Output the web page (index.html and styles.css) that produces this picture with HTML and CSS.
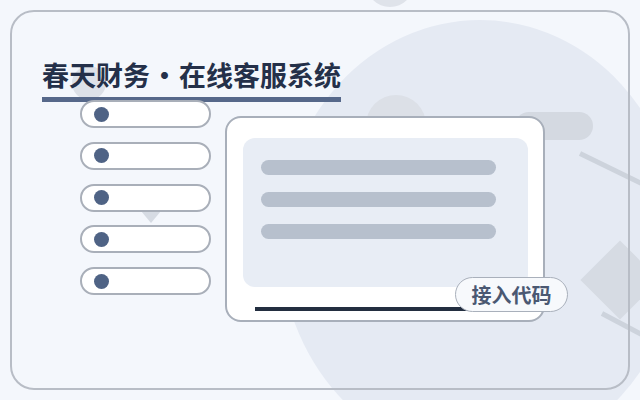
FILE: index.html
```html
<!DOCTYPE html>
<html lang="zh-CN">
<head>
<meta charset="utf-8">
<title>春天财务 · 在线客服系统</title>
<link rel="stylesheet" href="styles.css">
</head>
<body>
<div class="decor" aria-hidden="true">
  <div class="blob-big"></div>
  <div class="blob-top"></div>
  <div class="blob-mid"></div>
  <div class="blob-title"></div>
  <div class="capsule"></div>
  <div class="stroke stroke-a"></div>
  <div class="diamond"></div>
  <div class="stroke stroke-b"></div>
  <div class="tail"></div>
</div>
<main class="frame">
  <h1 class="title">春天财务<span class="sep">·</span>在线客服系统</h1>
  <div class="row">
    <ul class="pills">
      <li class="pill"><span class="dot"></span></li>
      <li class="pill"><span class="dot"></span></li>
      <li class="pill"><span class="dot"></span></li>
      <li class="pill"><span class="dot"></span></li>
      <li class="pill"><span class="dot"></span></li>
    </ul>
    <section class="card">
      <div class="panel">
        <div class="bar"></div>
        <div class="bar"></div>
        <div class="bar"></div>
      </div>
      <div class="code-line"></div>
      <button class="btn" type="button">接入代码</button>
    </section>
  </div>
</main>
</body>
</html>
```
FILE: styles.css
```css
* { box-sizing: border-box; }

html, body {
  margin: 0;
  padding: 0;
}

body {
  position: relative;
  width: 640px;
  height: 400px;
  overflow: hidden;
  background: #f4f7fc;
  font-family: "Noto Sans CJK SC", "Noto Sans", sans-serif;
}

/* decorative background layer */
.decor {
  position: absolute;
  inset: 0;
  z-index: 0;
  overflow: hidden;
}
.decor > div { position: absolute; }

.blob-big {
  left: 280px;
  top: 20px;
  width: 400px;
  height: 440px;
  border-radius: 50%;
  background: #e5eaf3;
}
.blob-top {
  left: 366px;
  top: -41px;
  width: 48px;
  height: 48px;
  border-radius: 50%;
  background: #dfe3ea;
}
.blob-mid {
  left: 366px;
  top: 95px;
  width: 60px;
  height: 60px;
  border-radius: 50%;
  background: #dce0e7;
}
.blob-title {
  left: 72px;
  top: 66px;
  width: 34px;
  height: 34px;
  border-radius: 50%;
  background: #dde1e8;
}
.capsule {
  left: 515px;
  top: 112px;
  width: 78px;
  height: 28px;
  border-radius: 14px;
  background: #d4d9e1;
}
.stroke {
  height: 5px;
  background: #cdd3dc;
  transform-origin: 0 50%;
}
.stroke-a {
  left: 580px;
  top: 151px;
  width: 80px;
  transform: rotate(26deg);
}
.stroke-b {
  left: 602px;
  top: 311px;
  width: 60px;
  transform: rotate(28deg);
}
.diamond {
  left: 592px;
  top: 252px;
  width: 56px;
  height: 56px;
  background: #d6dbe3;
  transform: rotate(45deg);
}
.tail {
  left: 136px;
  top: 205px;
  width: 0;
  height: 0;
  border-left: 15px solid transparent;
  border-right: 15px solid transparent;
  border-top: 18px solid #d6dbe3;
}

/* framed card */
.frame {
  position: relative;
  z-index: 1;
  margin: 10px;
  height: 380px;
  border: 2px solid #b8bdc6;
  border-radius: 24px;
  padding: 47px 0 0 30px;
  display: flex;
  flex-direction: column;
  align-items: flex-start;
}

.title {
  margin: 0 0 -2px;
  display: inline-block;
  font-size: 27px;
  line-height: 32px;
  font-weight: 700;
  color: #243049;
  padding-bottom: 6px;
  border-bottom: 5px solid #56688a;
  white-space: nowrap;
}
.sep {
  display: inline-block;
  width: 29px;
  text-align: center;
}

.row {
  display: flex;
  align-items: flex-start;
  gap: 14px;
  margin-left: 38px;
}

.pills {
  list-style: none;
  margin: 0;
  padding: 0;
  display: flex;
  flex-direction: column;
  gap: 13.75px;
}
.pill {
  width: 131px;
  height: 28px;
  border: 2px solid #a9afb9;
  border-radius: 14px;
  background: #fff;
  display: flex;
  align-items: center;
  padding-left: 12px;
}
.dot {
  width: 15px;
  height: 15px;
  border-radius: 50%;
  background: #4f6385;
}

.card {
  position: relative;
  margin-top: 16px;
  width: 320px;
  height: 206px;
  border: 2px solid #a8afba;
  border-radius: 16px;
  background: #fff;
  padding: 20px 15px 0 16px;
}
.panel {
  height: 149px;
  border-radius: 12px;
  background: #e8edf5;
  padding: 22px 32px 0 18px;
  display: flex;
  flex-direction: column;
  gap: 17px;
}
.bar {
  height: 15px;
  border-radius: 8px;
  background: #b7c0cd;
}
.code-line {
  margin: 20px 0 0 12px;
  width: 215px;
  height: 4px;
  background: #232e40;
}
.btn {
  position: absolute;
  left: 228px;
  top: 159px;
  width: 113px;
  height: 35px;
  margin: 0;
  padding: 0;
  border: 1.5px solid #a9b0bb;
  border-radius: 18px;
  background: #f7f9fc;
  font-family: "Noto Sans CJK SC", sans-serif;
  font-size: 20px;
  font-weight: 700;
  color: #4a5872;
  display: flex;
  align-items: center;
  justify-content: center;
}
```
